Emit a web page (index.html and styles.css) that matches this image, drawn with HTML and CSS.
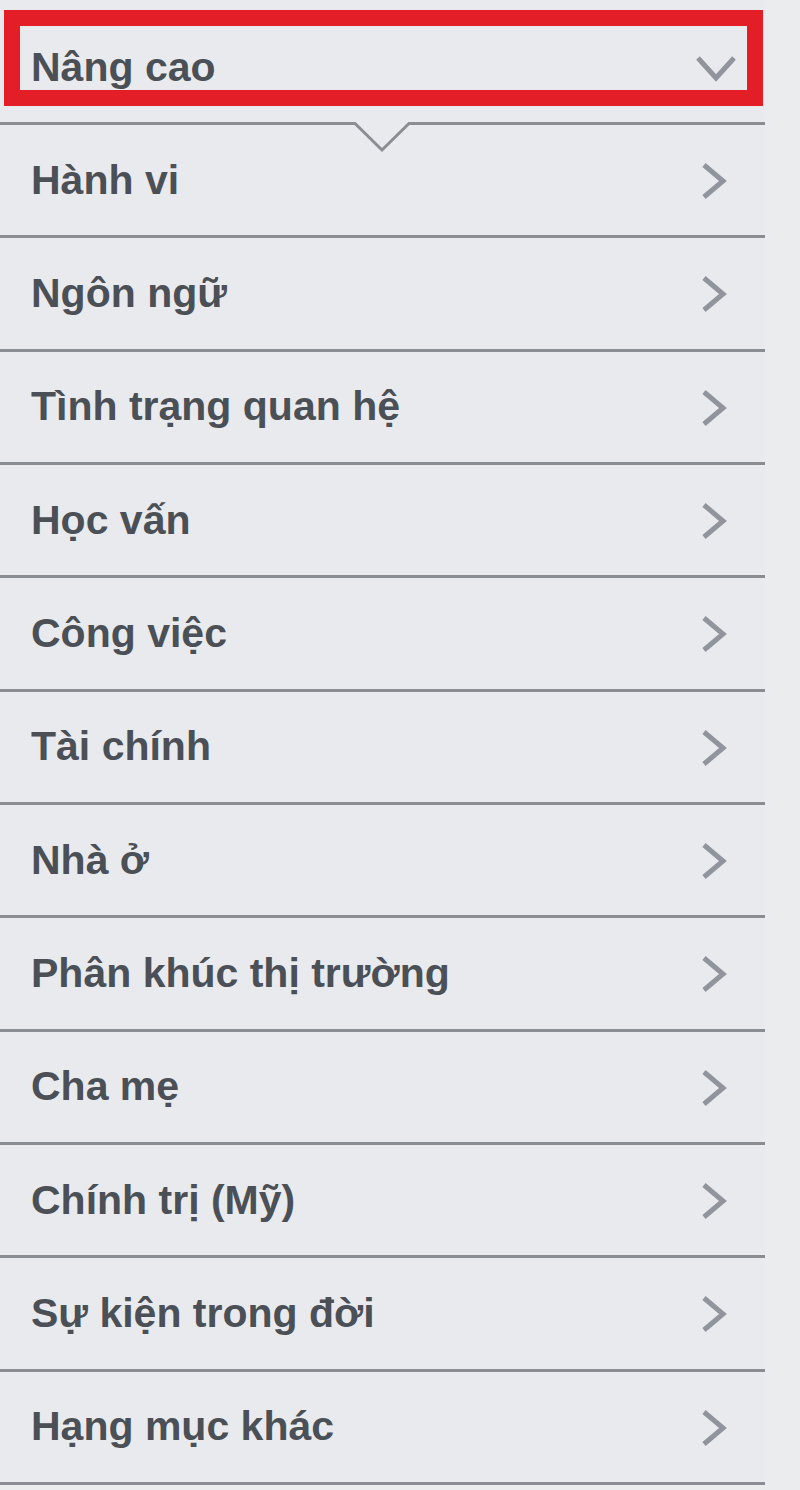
FILE: index.html
```html
<!DOCTYPE html>
<html lang="vi">
<head>
<meta charset="utf-8">
<link rel="stylesheet" href="styles.css">
</head>
<body>
<div class="menu">
  <div class="header">
    <span class="label">Nâng cao</span>
    <svg class="down" viewBox="0 0 42 28" width="42" height="28"><polyline points="3,4 21,24 39,4" fill="none" stroke="#90949c" stroke-width="5"/></svg>
    <div class="highlight"></div>
    <svg class="notch" viewBox="0 0 60 32" width="60" height="32"><polygon points="0,0 60,0 60,1.5 57,1.5 30,28 3,1.5 0,1.5" fill="#e9eaed"/><polyline points="0,1.5 3,1.5 30,28 57,1.5 60,1.5" fill="none" stroke="#8a8d92" stroke-width="3"/></svg>
  </div>
  <div class="row"><span class="label">Hành vi</span><svg class="chev" viewBox="0 0 28 40" width="28" height="40"><polyline points="4,4 23,20 4,36" fill="none" stroke="#90949c" stroke-width="5"/></svg></div>
  <div class="row"><span class="label">Ngôn ngữ</span><svg class="chev" viewBox="0 0 28 40" width="28" height="40"><polyline points="4,4 23,20 4,36" fill="none" stroke="#90949c" stroke-width="5"/></svg></div>
  <div class="row"><span class="label">Tình trạng quan hệ</span><svg class="chev" viewBox="0 0 28 40" width="28" height="40"><polyline points="4,4 23,20 4,36" fill="none" stroke="#90949c" stroke-width="5"/></svg></div>
  <div class="row"><span class="label">Học vấn</span><svg class="chev" viewBox="0 0 28 40" width="28" height="40"><polyline points="4,4 23,20 4,36" fill="none" stroke="#90949c" stroke-width="5"/></svg></div>
  <div class="row"><span class="label">Công việc</span><svg class="chev" viewBox="0 0 28 40" width="28" height="40"><polyline points="4,4 23,20 4,36" fill="none" stroke="#90949c" stroke-width="5"/></svg></div>
  <div class="row"><span class="label">Tài chính</span><svg class="chev" viewBox="0 0 28 40" width="28" height="40"><polyline points="4,4 23,20 4,36" fill="none" stroke="#90949c" stroke-width="5"/></svg></div>
  <div class="row"><span class="label">Nhà ở</span><svg class="chev" viewBox="0 0 28 40" width="28" height="40"><polyline points="4,4 23,20 4,36" fill="none" stroke="#90949c" stroke-width="5"/></svg></div>
  <div class="row"><span class="label">Phân khúc thị trường</span><svg class="chev" viewBox="0 0 28 40" width="28" height="40"><polyline points="4,4 23,20 4,36" fill="none" stroke="#90949c" stroke-width="5"/></svg></div>
  <div class="row"><span class="label">Cha mẹ</span><svg class="chev" viewBox="0 0 28 40" width="28" height="40"><polyline points="4,4 23,20 4,36" fill="none" stroke="#90949c" stroke-width="5"/></svg></div>
  <div class="row"><span class="label">Chính trị (Mỹ)</span><svg class="chev" viewBox="0 0 28 40" width="28" height="40"><polyline points="4,4 23,20 4,36" fill="none" stroke="#90949c" stroke-width="5"/></svg></div>
  <div class="row"><span class="label">Sự kiện trong đời</span><svg class="chev" viewBox="0 0 28 40" width="28" height="40"><polyline points="4,4 23,20 4,36" fill="none" stroke="#90949c" stroke-width="5"/></svg></div>
  <div class="row"><span class="label">Hạng mục khác</span><svg class="chev" viewBox="0 0 28 40" width="28" height="40"><polyline points="4,4 23,20 4,36" fill="none" stroke="#90949c" stroke-width="5"/></svg></div>
</div>
</body>
</html>
```

FILE: styles.css
```css
html, body {
  margin: 0;
  padding: 0;
}
body {
  background: #ebecee;
  font-family: "Liberation Sans", Arial, sans-serif;
}
.menu {
  width: 765px;
  background: #e9eaed;
}
.header {
  position: relative;
  height: 125px;
  box-sizing: border-box;
  border-bottom: 3px solid #8a8d92;
  display: flex;
  align-items: center;
  justify-content: space-between;
  padding: 12px 31px 0 31px;
}
.label {
  font-size: 41px;
  font-weight: bold;
  color: #4b4f56;
  line-height: 1;
}
.down {
  margin-right: -3px;
  margin-top: 2px;
}
.highlight {
  position: absolute;
  left: 4px;
  top: 10px;
  width: 759px;
  height: 96px;
  box-sizing: border-box;
  border: 16px solid #e41e26;
}
.notch {
  position: absolute;
  left: 352px;
  top: 122px;
}
.row {
  height: 113.33px;
  box-sizing: border-box;
  border-bottom: 3px solid #8a8d92;
  display: flex;
  align-items: center;
  justify-content: space-between;
  padding: 0 37px 0 31px;
}
.chev {
  margin-top: 2px;
}
```
